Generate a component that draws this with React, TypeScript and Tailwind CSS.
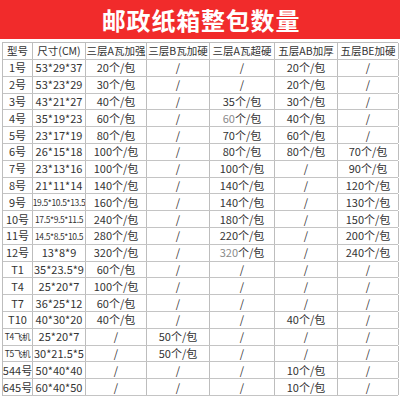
import React from "react";

const header = ["型号", "尺寸(CM)", "三层A瓦加强", "三层B瓦加硬", "三层A瓦超硬", "五层AB加厚", "五层BE加硬"];

const rows: string[][] = [
  ["1号", "53*29*37", "20个/包", "/", "/", "20个/包", "/"],
  ["2号", "53*23*29", "30个/包", "/", "/", "20个/包", "/"],
  ["3号", "43*21*27", "40个/包", "/", "35个/包", "30个/包", "/"],
  ["4号", "35*19*23", "60个/包", "/", "G60", "40个/包", "/"],
  ["5号", "23*17*19", "80个/包", "/", "70个/包", "60个/包", "/"],
  ["6号", "26*15*18", "100个/包", "/", "80个/包", "80个/包", "70个/包"],
  ["7号", "23*13*16", "100个/包", "/", "100个/包", "/", "90个/包"],
  ["8号", "21*11*14", "140个/包", "/", "140个/包", "/", "120个/包"],
  ["9号", "S19.5*10.5*13.5", "160个/包", "/", "140个/包", "/", "130个/包"],
  ["10号", "S17.5*9.5*11.5", "240个/包", "/", "180个/包", "/", "150个/包"],
  ["11号", "S14.5*8.5*10.5", "280个/包", "/", "220个/包", "/", "200个/包"],
  ["12号", "13*8*9", "320个/包", "/", "G320", "/", "240个/包"],
  ["T1", "35*23.5*9", "60个/包", "/", "/", "/", "/"],
  ["T4", "25*20*7", "100个/包", "/", "/", "/", "/"],
  ["T7", "36*25*12", "60个/包", "/", "/", "/", "/"],
  ["T10", "40*30*20", "40个/包", "/", "/", "40个/包", "/"],
  ["ST4飞机", "25*20*7", "/", "50个/包", "/", "/", "/"],
  ["ST5飞机", "30*21.5*5", "/", "50个/包", "/", "/", "/"],
  ["544号", "50*40*40", "/", "/", "/", "10个/包", "/"],
  ["645号", "60*40*50", "/", "/", "/", "10个/包", "/"],
];

function renderCell(v: string) {
  if (v.startsWith("G")) {
    return (
      <span>
        <span className="text-[#8a8a8a]">{v.slice(1)}</span>个/包
      </span>
    );
  }
  if (v.startsWith("S")) {
    return <span className="text-[8.5px] tracking-[-0.35px]">{v.slice(1)}</span>;
  }
  return <span>{v}</span>;
}

export default function App() {
  const font = { fontFamily: '"Noto Sans CJK SC", "Noto Sans", sans-serif' };
  return (
    <div className="w-[400px] h-[400px] bg-white overflow-hidden" style={font}>
      <div className="h-[39px] bg-[#f12b2b] flex items-center justify-center">
        <span className="text-white font-bold text-[24px] tracking-[0.8px] leading-none pl-[2px]">邮政纸箱整包数量</span>
      </div>
      <div className="pt-[3px] px-[2px]">
        <div className="border-t border-l border-[#bdbdbd]">
          <div className="grid grid-cols-[30px_53px_61px_63px_65px_63px_61px] h-[17px] border-b-[1.5px] border-[#c4c4c4]">
            {header.map((h, i) => (
              <div
                key={i}
                className="border-r border-[#bdbdbd] flex items-center justify-center text-[10.5px] text-[#333] leading-none whitespace-nowrap"
              >
                {h}
              </div>
            ))}
          </div>
          {rows.map((r, ri) => (
            <div
              key={ri}
              className="grid grid-cols-[30px_53px_61px_63px_65px_63px_61px] h-[16.8px] border-b-[1.5px] border-[#c4c4c4]"
            >
              {r.map((c, ci) => (
                <div
                  key={ci}
                  className="border-r border-[#bdbdbd] flex items-center justify-center text-[11px] text-[#333] leading-none whitespace-nowrap overflow-hidden"
                >
                  {renderCell(c)}
                </div>
              ))}
            </div>
          ))}
        </div>
      </div>
    </div>
  );
}
